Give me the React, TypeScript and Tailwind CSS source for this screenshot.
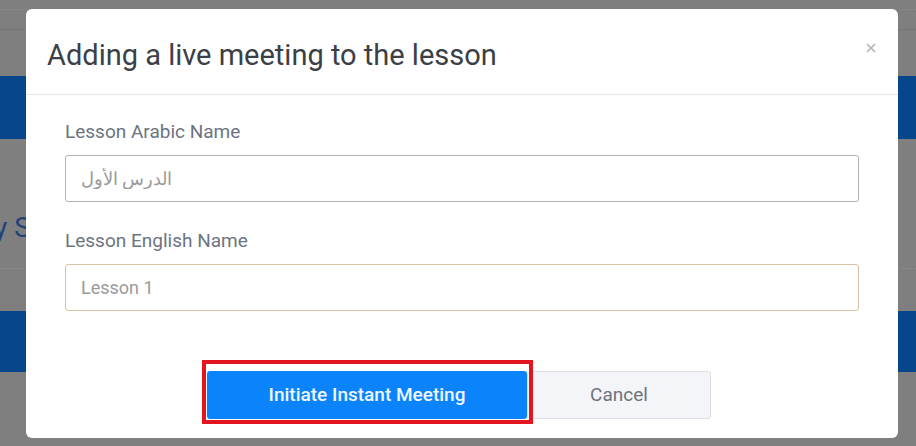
import { X } from "lucide-react";

function Backdrop() {
  return (
    <div className="flex h-full w-full flex-col bg-[#7f7f7f]">
      <div className="h-[10px] border-b border-dotted border-[#8a8a8a]" />
      <div className="h-[20px] border-b border-[#757575]" />
      <div className="h-[46px]" />
      <div className="h-[63px] bg-[#07468a]" />
      <div className="flex h-[129px] items-center">
        <span className="mt-[48px] -ml-[6px] text-[28px] text-[#20427a]">y Se</span>
      </div>
      <div className="h-[43px] border-t border-dotted border-[#8c8c8c]" />
      <div className="h-[61px] bg-[#07468a]" />
    </div>
  );
}

function Field({
  label,
  placeholder,
  focused,
}: {
  label: string;
  placeholder: string;
  focused?: boolean;
}) {
  return (
    <label className="flex flex-col">
      <span className="text-[19px] leading-[22px] text-[#6b7481]">{label}</span>
      <input
        placeholder={placeholder}
        className={
          "mt-[12px] h-[47px] w-full rounded-[3px] border bg-white px-[15px] text-[18px] outline-none placeholder:text-[#9a9a9a] " +
          (focused ? "border-[#d9c2a4]" : "border-[#b0b0b0]")
        }
      />
    </label>
  );
}

export default function App() {
  return (
    <div
      className="relative h-[446px] w-[916px] overflow-hidden"
      style={{ fontFamily: "Roboto, 'Noto Sans', sans-serif" }}
    >
      <Backdrop />
      <div className="absolute left-[26px] top-[9px] flex h-[429px] w-[872px] flex-col rounded-[6px] bg-white">
        <div className="flex h-[86px] items-center justify-between border-b border-[#e6e6e6] pl-[21px] pr-[20px]">
          <h1 className="mt-[8px] text-[29px] font-normal text-[#3b4046]">Adding a live meeting to the lesson</h1>
          <X className="mb-[8px] h-[14px] w-[14px] text-[#b5b5b5]" strokeWidth={3} />
        </div>
        <div className="flex flex-col gap-[28px] px-[39px] pt-[26px]">
          <Field label="Lesson Arabic Name" placeholder="الدرس الأول" />
          <Field label="Lesson English Name" placeholder="Lesson 1" focused />
        </div>
        <div className="mt-[60px] flex justify-center pr-[6px]">
          <div className="relative">
            <button className="h-[48px] w-[320px] rounded-[3px] bg-[#0b84fb] text-[19px] font-medium text-[#eef6ff]">
              Initiate Instant Meeting
            </button>
            <div className="pointer-events-none absolute -bottom-[5px] -left-[5px] -right-[6px] -top-[11px] border-[4px] border-[#e3161f]" />
          </div>
          <button className="h-[48px] w-[184px] rounded-[3px] border border-[#dedfe2] bg-[#f4f5f8] text-[19px] text-[#6c737c]">
            Cancel
          </button>
        </div>
      </div>
    </div>
  );
}
